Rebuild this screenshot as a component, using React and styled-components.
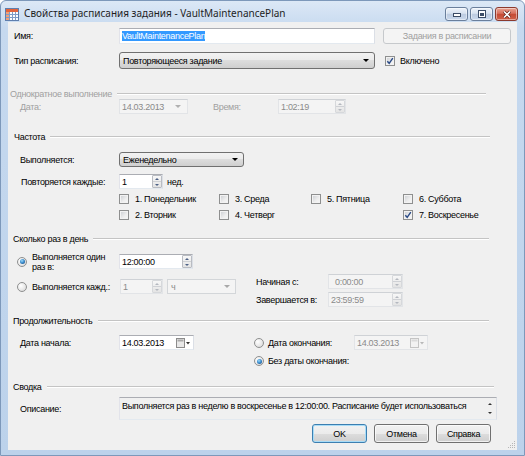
import styled, { createGlobalStyle, css } from "styled-components";

const GlobalStyle = createGlobalStyle`
  html, body { margin: 0; padding: 0; background: #fff; }
  body {
    font-family: "Liberation Sans", Arial, sans-serif;
    font-size: 9px;
    letter-spacing: -0.3px;
    color: #000;
  }
`;

const Window = styled.div`
  width: 525px;
  height: 456px;
  box-sizing: border-box;
  display: flex;
  flex-direction: column;
  padding: 0 7px 5px 7px;
  border: 1px solid #7d98ba;
  border-radius: 6px 6px 0 0;
  background: linear-gradient(180deg, #dce8f6 0%, #c6d9ef 6%, #bcd2eb 100%);
  overflow: hidden;
`;

const TitleBar = styled.div`
  height: 21px;
  margin: 0 -7px;
  padding: 0 6px 0 4px;
  display: flex;
  align-items: flex-start;
  flex-shrink: 0;
`;

const TitleIcon = styled.svg`
  margin-top: 7px;
  flex-shrink: 0;
`;

const TitleText = styled.span`
  margin-left: 5px;
  margin-top: 6px;
  font-family: "Noto Sans", "Open Sans", sans-serif;
  font-size: 10px;
  letter-spacing: 0;
  line-height: 13px;
  color: #1e1e1e;
  white-space: nowrap;
`;

const TitleButtons = styled.div`
  margin-left: auto;
  margin-top: 6px;
  display: flex;
  gap: 2px;
`;

const TitleBtn = styled.div`
  width: 23px;
  height: 14px;
  box-sizing: border-box;
  border: 1px solid ${p => (p.$close ? "#8b3a2e" : "#6a7f9c")};
  border-radius: 3px;
  display: flex;
  align-items: center;
  justify-content: center;
  background: ${p =>
    p.$close
      ? "linear-gradient(#e8a493 0%, #d8705d 45%, #c44a34 50%, #d2624a 100%)"
      : "linear-gradient(#eef3fa 0%, #d7e2f0 45%, #bccbe0 50%, #c9d8ec 100%)"};
  box-shadow: inset 0 0 0 1px rgba(255, 255, 255, 0.45);
`;

const Client = styled.div`
  flex: 1;
  position: relative;
  background: #f0f0f0;
  display: flex;
  flex-direction: column;
`;

const Row = styled.div`
  display: flex;
  align-items: ${p => p.$align || "center"};
  height: ${p => p.$h}px;
  margin-top: ${p => p.$mt || 0}px;
  padding-left: ${p => p.$pl || 0}px;
  flex-shrink: 0;
`;

const Label = styled.span`
  width: ${p => (p.$w ? `${p.$w}px` : "auto")};
  margin-left: ${p => p.$ml || 0}px;
  flex-shrink: 0;
  white-space: nowrap;
  line-height: 10px;
  color: ${p => (p.$disabled ? "#a0a0a0" : "#000")};
`;

const Group = styled.div`
  display: flex;
  align-items: center;
  height: 10px;
  margin-top: ${p => p.$mt}px;
  padding: 0 ${p => p.$pr}px 0 ${p => p.$pl}px;
  color: ${p => (p.$disabled ? "#a0a0a0" : "#000")};
  white-space: nowrap;
  flex-shrink: 0;
  &::after {
    content: "";
    flex: 1;
    margin-left: 5px;
    border-top: 1px solid #c4c4c4;
    border-bottom: 1px solid #ffffff;
  }
`;

const Field = styled.div`
  box-sizing: border-box;
  width: ${p => p.$w}px;
  height: ${p => p.$h || 15}px;
  margin-left: ${p => p.$ml || 0}px;
  display: flex;
  align-items: ${p => p.$align || "center"};
  flex-shrink: 0;
  border: 1px solid;
  border-color: ${p =>
    p.$disabled ? "#cfd2d6 #e2e4e7 #e2e4e7 #e2e4e7" : "#abadb3 #dbdfe6 #e3e9ef #e2e3ea"};
  background: ${p => (p.$disabled ? "#f4f4f4" : p.$readonly ? "#f0f0f0" : "#ffffff")};
  color: ${p => (p.$disabled ? "#8a8a8a" : "#000")};
  line-height: 10px;
  padding-left: 2px;
`;

const FieldText = styled.span`
  flex: 1;
  white-space: nowrap;
  overflow: hidden;
  padding-top: ${p => p.$pt || 0}px;
  padding-left: ${p => p.$pl || 0}px;
`;

const Selected = styled.span`
  background: #3399ff;
  color: #fff;
  padding: 1px 0;
`;

const Spin = styled.div`
  width: 10px;
  height: 13px;
  box-sizing: border-box;
  border: 1px solid ${p => (p.$disabled ? "#d6d8db" : "#b9bcc2")};
  border-radius: 1px;
  display: flex;
  flex-direction: column;
  background: linear-gradient(#f7f7f7, #e4e4e4);
  flex-shrink: 0;
`;

const SpinHalf = styled.div`
  flex: 1;
  display: flex;
  align-items: center;
  justify-content: center;
  & + & {
    border-top: 1px solid #cfd1d5;
  }
`;

const Tri = styled.i`
  width: 0;
  height: 0;
  flex-shrink: 0;
  border-left: ${p => p.$s || 2}px solid transparent;
  border-right: ${p => p.$s || 2}px solid transparent;
  ${p =>
    p.$up
      ? css`border-bottom: ${p.$s || 2}px solid ${p.$c || "#4d6185"};`
      : css`border-top: ${p.$s || 2}px solid ${p.$c || "#4d6185"};`}
`;

const Combo = styled.div`
  box-sizing: border-box;
  width: ${p => p.$w}px;
  height: ${p => p.$h || 16}px;
  margin-left: ${p => p.$ml || 0}px;
  display: flex;
  align-items: center;
  flex-shrink: 0;
  padding: 0 5px 0 3px;
  line-height: 10px;
  ${p =>
    p.$disabled
      ? css`
          border: 1px solid #d3d6d9;
          background: #f4f4f4;
          color: #8a8a8a;
        `
      : css`
          border: 1px solid #707070;
          border-radius: 3px;
          background: linear-gradient(#f2f2f2 0%, #ebebeb 50%, #dddddd 50%, #cfcfcf 100%);
        `}
`;

const CheckBox = styled.span`
  width: 10px;
  height: 10px;
  box-sizing: border-box;
  border: 1px solid #8e8f8f;
  background: linear-gradient(135deg, #c9ccd1 0%, #eeeeee 60%, #f8f8f8 100%);
  box-shadow: inset 0 0 0 1px #f2f2f2;
  display: flex;
  align-items: center;
  justify-content: center;
  flex-shrink: 0;
`;

const Check = styled.div`
  display: flex;
  align-items: center;
  gap: ${p => p.$gap || 6}px;
  width: ${p => (p.$w ? `${p.$w}px` : "auto")};
  margin-left: ${p => p.$ml || 0}px;
  flex-shrink: 0;
  line-height: 10px;
  white-space: nowrap;
`;

const Spacer = styled.div`
  width: ${p => p.$w}px;
  flex-shrink: 0;
`;

const RadioDot = styled.span`
  width: 10px;
  height: 10px;
  box-sizing: border-box;
  border-radius: 50%;
  border: 1px solid #8e8f8f;
  background: radial-gradient(circle at 35% 35%, #ffffff 0%, #e6e6e6 60%, #cfcfcf 100%);
  display: flex;
  align-items: center;
  justify-content: center;
  flex-shrink: 0;
  &::after {
    content: "";
    display: ${p => (p.$on ? "block" : "none")};
    width: 5px;
    height: 5px;
    border-radius: 50%;
    background: radial-gradient(circle at 40% 35%, #9fdcfb 0%, #3d8fd0 45%, #0d3f76 100%);
  }
`;

const Radio = styled.div`
  display: flex;
  align-items: center;
  gap: ${p => p.$gap || 5}px;
  flex-shrink: 0;
`;

const Button = styled.div`
  box-sizing: border-box;
  width: ${p => p.$w}px;
  height: ${p => p.$h || 19}px;
  margin-left: ${p => p.$ml || 0}px;
  display: flex;
  align-items: center;
  justify-content: center;
  flex-shrink: 0;
  border-radius: 3px;
  border: 1px solid #707070;
  background: linear-gradient(#f2f2f2 0%, #ebebeb 50%, #dddddd 50%, #cfcfcf 100%);
  box-shadow: inset 0 0 0 1px rgba(255, 255, 255, 0.7);
  ${p =>
    p.$default &&
    css`
      border-color: #3c7fb1;
      box-shadow: inset 0 0 0 1px #a8dcf7;
    `}
  ${p =>
    p.$disabled &&
    css`
      border-color: #c6c9cc;
      background: #f4f4f4;
      box-shadow: none;
      color: #a0a0a0;
    `}
`;

const Column = styled.div`
  display: flex;
  flex-direction: column;
  gap: ${p => p.$gap || 0}px;
  margin-left: ${p => p.$ml || 0}px;
  margin-top: ${p => p.$mt || 0}px;
  flex-shrink: 0;
`;

const Footer = styled.div`
  display: flex;
  justify-content: flex-end;
  gap: 7px;
  margin-top: 4px;
  padding-right: 26px;
  flex-shrink: 0;
`;

const ScrollArrows = styled.div`
  width: 12px;
  align-self: stretch;
  display: flex;
  flex-direction: column;
  align-items: center;
  justify-content: space-between;
  padding: 5px 0 5px;
  box-sizing: border-box;
  flex-shrink: 0;
`;

const Grip = styled.svg`
  position: absolute;
  right: 1px;
  bottom: 1px;
`;

const Arrow = ({ disabled }) => <Tri $s={3} $c={disabled ? "#a8a8a8" : "#000"} />;

const SpinBox = ({ disabled }) => (
  <Spin $disabled={disabled}>
    <SpinHalf>
      <Tri $up $c={disabled ? "#b4b8bf" : "#4d6185"} />
    </SpinHalf>
    <SpinHalf>
      <Tri $c={disabled ? "#b4b8bf" : "#4d6185"} />
    </SpinHalf>
  </Spin>
);

const CheckMark = () => (
  <svg width="8" height="8" viewBox="0 0 8 8">
    <path d="M1.3 4.2 L3.2 6.3 L6.8 1.2" fill="none" stroke="#2a4a86" strokeWidth="1.4" />
  </svg>
);

const CheckItem = ({ label, checked, w, ml }) => (
  <Check $w={w} $ml={ml}>
    <CheckBox>{checked && <CheckMark />}</CheckBox>
    <span>{label}</span>
  </Check>
);

const CalendarIcon = ({ disabled }) => (
  <svg width="15" height="10" viewBox="0 0 15 10" style={{ marginRight: 2, flexShrink: 0 }}>
    <rect x="0.5" y="0.5" width="8" height="9" fill={disabled ? "#f2f2f2" : "#e8e8e8"} stroke={disabled ? "#c4c4c4" : "#8c8c8c"} />
    <rect x="1.5" y="1.5" width="6" height="2" fill={disabled ? "#dadada" : "#a9a9a9"} />
    <path d="M10 4 L14 4 L12 6.5 Z" fill={disabled ? "#b8b8b8" : "#303030"} />
  </svg>
);

const App = () => {
  return (
    <>
      <GlobalStyle />
      <Window>
        <TitleBar>
          <TitleIcon width="14" height="13" viewBox="0 0 14 13">
            <rect x="0.5" y="0.5" width="13" height="12" fill="#fdfdfd" stroke="#5f7fae" />
            <rect x="1" y="1" width="12" height="3" fill="#e3643c" />
            <rect x="1" y="4" width="3" height="8" fill="#f0a07a" />
            <path d="M4.5 4 V12 M7.5 4 V12 M10.5 4 V12 M1 6.5 H13 M1 9.5 H13" stroke="#7f9cc6" strokeWidth="1" />
          </TitleIcon>
          <TitleText>Свойства расписания задания - VaultMaintenancePlan</TitleText>
          <TitleButtons>
            <TitleBtn>
              <svg width="10" height="6" viewBox="0 0 10 6">
                <rect x="1.5" y="2.5" width="7" height="3" fill="#fff" stroke="#3b4c66" />
              </svg>
            </TitleBtn>
            <TitleBtn>
              <svg width="10" height="8" viewBox="0 0 10 8">
                <rect x="1.5" y="0.5" width="7" height="7" fill="#fff" stroke="#3b4c66" />
                <rect x="3" y="3" width="4" height="3" fill="#3b4c66" />
              </svg>
            </TitleBtn>
            <TitleBtn $close>
              <svg width="10" height="9" viewBox="0 0 10 9">
                <path d="M2 1.5 L8 7.5 M8 1.5 L2 7.5" stroke="#5a1a10" strokeWidth="3" />
                <path d="M2 1.5 L8 7.5 M8 1.5 L2 7.5" stroke="#fff" strokeWidth="1.7" />
              </svg>
            </TitleBtn>
          </TitleButtons>
        </TitleBar>

        <Client>
          <Row $mt={6} $h={16} $pl={6}>
            <Label $w={105}>Имя:</Label>
            <Field $w={256} $h={16}>
              <FieldText>
                <Selected>VaultMaintenancePlan</Selected>
              </FieldText>
            </Field>
            <Button $w={128} $h={16} $ml={8} $disabled>
              Задания в расписании
            </Button>
          </Row>

          <Row $mt={8} $h={17} $pl={6}>
            <Label $w={105}>Тип расписания:</Label>
            <Combo $w={256} $h={17}>
              <FieldText>Повторяющееся задание</FieldText>
              <Arrow />
            </Combo>
            <Check $ml={10} $gap={5}>
              <CheckBox>
                <CheckMark />
              </CheckBox>
              <span>Включено</span>
            </Check>
          </Row>

          <Group $mt={20} $pl={2} $pr={31} $disabled>
            Однократное выполнение
          </Group>
          <Row $h={15} $pl={12}>
            <Label $w={99} $disabled>
              Дата:
            </Label>
            <Field $w={69} $disabled>
              <FieldText>14.03.2013</FieldText>
              <Tri $s={3} $c="#b0b0b0" style={{ marginRight: 6 }} />
            </Field>
            <Label $w={65} $ml={25} $disabled>
              Время:
            </Label>
            <Field $w={68} $disabled>
              <FieldText>1:02:19</FieldText>
              <SpinBox disabled />
            </Field>
          </Row>

          <Group $mt={18} $pl={6} $pr={27}>
            Частота
          </Group>
          <Row $mt={10} $h={15} $pl={12}>
            <Label $w={99}>Выполняется:</Label>
            <Combo $w={125} $h={15}>
              <FieldText>Еженедельно</FieldText>
              <Arrow />
            </Combo>
          </Row>
          <Row $mt={7} $h={15} $pl={13}>
            <Label $w={98}>Повторяется каждые:</Label>
            <Field $w={44}>
              <FieldText>1</FieldText>
              <SpinBox />
            </Field>
            <Label $ml={4}>нед.</Label>
          </Row>
          <Row $mt={4} $h={12} $pl={111}>
            <CheckItem w={100} label="1. Понедельник" />
            <CheckItem w={92} label="3. Среда" />
            <CheckItem w={92} label="5. Пятница" />
            <CheckItem label="6. Суббота" />
          </Row>
          <Row $mt={4} $h={12} $pl={111}>
            <CheckItem w={100} label="2. Вторник" />
            <CheckItem w={92} label="4. Четверг" />
            <Spacer $w={92} />
            <CheckItem label="7. Воскресенье" checked />
          </Row>

          <Group $mt={13} $pl={5} $pr={28}>
            Сколько раз в день
          </Group>
          <Row $mt={10} $h={15} $pl={9}>
            <Radio>
              <RadioDot $on />
              <Label $w={87}>
                Выполняется один
                <br />
                раз в:
              </Label>
            </Radio>
            <Field $w={74}>
              <FieldText>12:00:00</FieldText>
              <SpinBox />
            </Field>
          </Row>
          <Row $mt={5} $h={33} $pl={9} $align="flex-start">
            <Row $mt={5} $h={15}>
              <Radio>
                <RadioDot />
                <Label $w={88}>Выполняется кажд.:</Label>
              </Radio>
              <Field $w={43} $disabled>
                <FieldText>1</FieldText>
                <SpinBox disabled />
              </Field>
              <Combo $w={69} $h={15} $ml={4} $disabled>
                <FieldText>ч</FieldText>
                <Arrow disabled />
              </Combo>
            </Row>
            <Column $gap={3} $ml={20}>
              <Row $h={15}>
                <Label $w={72}>Начиная с:</Label>
                <Field $w={75} $disabled>
                  <FieldText $pl={4}>0:00:00</FieldText>
                  <SpinBox disabled />
                </Field>
              </Row>
              <Row $h={15}>
                <Label $w={72}>Завершается в:</Label>
                <Field $w={75} $disabled>
                  <FieldText>23:59:59</FieldText>
                  <SpinBox disabled />
                </Field>
              </Row>
            </Column>
          </Row>

          <Group $mt={9} $pl={5} $pr={28}>
            Продолжительность
          </Group>
          <Row $mt={9} $h={32} $pl={12} $align="flex-start">
            <Row $h={15}>
              <Label $w={99}>Дата начала:</Label>
              <Field $w={75}>
                <FieldText>14.03.2013</FieldText>
                <CalendarIcon />
              </Field>
            </Row>
            <Column $gap={5} $ml={60}>
              <Row $h={15}>
                <Radio $gap={4}>
                  <RadioDot />
                  <Label $w={86}>Дата окончания:</Label>
                </Radio>
                <Field $w={74} $disabled>
                  <FieldText>14.03.2013</FieldText>
                  <CalendarIcon disabled />
                </Field>
              </Row>
              <Row $h={12}>
                <Radio $gap={4}>
                  <RadioDot $on />
                  <Label>Без даты окончания:</Label>
                </Radio>
              </Row>
            </Column>
          </Row>

          <Group $mt={15} $pl={5} $pr={23}>
            Сводка
          </Group>
          <Row $mt={5} $h={23} $pl={12}>
            <Label $w={99}>Описание:</Label>
            <Field $w={378} $h={23} $readonly $align="flex-start">
              <FieldText $pt={3}>
                Выполняется раз в неделю в воскресенье в 12:00:00. Расписание будет использоваться
              </FieldText>
              <ScrollArrows>
                <Tri $up $s={2} $c="#333" />
                <Tri $s={2} $c="#333" />
              </ScrollArrows>
            </Field>
          </Row>

          <Footer>
            <Button $w={55} $default>
              OK
            </Button>
            <Button $w={55}>Отмена</Button>
            <Button $w={55}>Справка</Button>
          </Footer>

          <Grip width="8" height="8" viewBox="0 0 8 8">
            <g fill="#b6b6b6">
              <rect x="6" y="0" width="1" height="1" />
              <rect x="4" y="2" width="1" height="1" />
              <rect x="6" y="2" width="1" height="1" />
              <rect x="2" y="4" width="1" height="1" />
              <rect x="4" y="4" width="1" height="1" />
              <rect x="6" y="4" width="1" height="1" />
              <rect x="0" y="6" width="1" height="1" />
              <rect x="2" y="6" width="1" height="1" />
              <rect x="4" y="6" width="1" height="1" />
              <rect x="6" y="6" width="1" height="1" />
            </g>
          </Grip>
        </Client>
      </Window>
    </>
  );
};

export default App;
